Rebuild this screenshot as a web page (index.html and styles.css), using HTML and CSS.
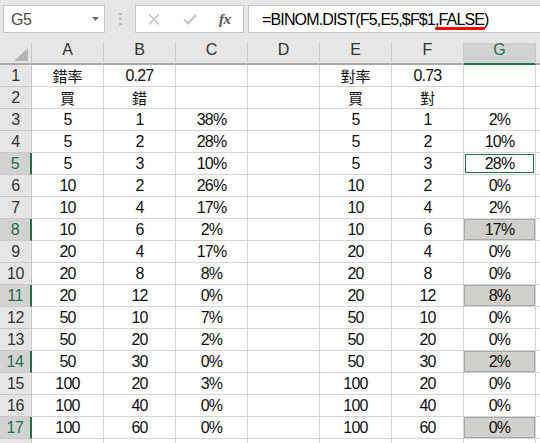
FILE: index.html
```html
<!DOCTYPE html>
<html lang="zh-Hant">
<head>
<meta charset="utf-8">
<title>BINOM.DIST</title>
<link rel="stylesheet" href="styles.css">
</head>
<body>
<div class="app">
  <div class="formula-bar">
    <div class="name-box">
      <span class="cell-ref">G5</span>
      <svg class="caret" width="7" height="4" viewBox="0 0 7 4"><path d="M0 0h7L3.5 4z" fill="#707070"/></svg>
    </div>
    <div class="grip">
      <svg width="3" height="12" viewBox="0 0 3 12"><rect x="0" y="0" width="3" height="2" fill="#b9b9b9"/><rect x="0" y="5" width="3" height="2" fill="#b9b9b9"/><rect x="0" y="10" width="3" height="2" fill="#b9b9b9"/></svg>
    </div>
    <div class="fx-buttons">
      <svg class="btn-cancel" width="12" height="11" viewBox="0 0 12 11"><path d="M1 0.5L11 10.5M11 0.5L1 10.5" stroke="#c3c3c3" stroke-width="1.5" fill="none"/></svg>
      <svg class="btn-enter" width="14" height="11" viewBox="0 0 14 11"><path d="M1 5.5L5 9.5L13 1" stroke="#c3c3c3" stroke-width="2" fill="none"/></svg>
      <span class="btn-fx">fx</span>
    </div>
    <div class="formula-input">=BINOM.DIST(F5,E5,$F$1<span class="mark">,FALSE</span>)</div>
  </div>

  <div class="sheet">
    <div class="corner"><span class="corner-tri"></span></div>
    <div class="ch">A</div><div class="ch">B</div><div class="ch">C</div><div class="ch">D</div><div class="ch">E</div><div class="ch">F</div><div class="ch cur">G</div><div class="ch"></div>

    <div class="rh">1</div><div class="c cjk">錯率</div><div class="c">0.27</div><div class="c"></div><div class="c"></div><div class="c cjk">對率</div><div class="c">0.73</div><div class="c"></div><div class="c"></div>
    <div class="rh">2</div><div class="c cjk">買</div><div class="c cjk">錯</div><div class="c"></div><div class="c"></div><div class="c cjk">買</div><div class="c cjk">對</div><div class="c"></div><div class="c"></div>
    <div class="rh">3</div><div class="c">5</div><div class="c">1</div><div class="c">38%</div><div class="c"></div><div class="c">5</div><div class="c">1</div><div class="c">2%</div><div class="c"></div>
    <div class="rh">4</div><div class="c">5</div><div class="c">2</div><div class="c">28%</div><div class="c"></div><div class="c">5</div><div class="c">2</div><div class="c">10%</div><div class="c"></div>
    <div class="rh sel">5</div><div class="c">5</div><div class="c">3</div><div class="c">10%</div><div class="c"></div><div class="c">5</div><div class="c">3</div><div class="c active">28%</div><div class="c"></div>
    <div class="rh">6</div><div class="c">10</div><div class="c">2</div><div class="c">26%</div><div class="c"></div><div class="c">10</div><div class="c">2</div><div class="c">0%</div><div class="c"></div>
    <div class="rh">7</div><div class="c">10</div><div class="c">4</div><div class="c">17%</div><div class="c"></div><div class="c">10</div><div class="c">4</div><div class="c">2%</div><div class="c"></div>
    <div class="rh sel">8</div><div class="c">10</div><div class="c">6</div><div class="c">2%</div><div class="c"></div><div class="c">10</div><div class="c">6</div><div class="c picked">17%</div><div class="c"></div>
    <div class="rh">9</div><div class="c">20</div><div class="c">4</div><div class="c">17%</div><div class="c"></div><div class="c">20</div><div class="c">4</div><div class="c">0%</div><div class="c"></div>
    <div class="rh">10</div><div class="c">20</div><div class="c">8</div><div class="c">8%</div><div class="c"></div><div class="c">20</div><div class="c">8</div><div class="c">0%</div><div class="c"></div>
    <div class="rh sel">11</div><div class="c">20</div><div class="c">12</div><div class="c">0%</div><div class="c"></div><div class="c">20</div><div class="c">12</div><div class="c picked">8%</div><div class="c"></div>
    <div class="rh">12</div><div class="c">50</div><div class="c">10</div><div class="c">7%</div><div class="c"></div><div class="c">50</div><div class="c">10</div><div class="c">0%</div><div class="c"></div>
    <div class="rh">13</div><div class="c">50</div><div class="c">20</div><div class="c">2%</div><div class="c"></div><div class="c">50</div><div class="c">20</div><div class="c">0%</div><div class="c"></div>
    <div class="rh sel">14</div><div class="c">50</div><div class="c">30</div><div class="c">0%</div><div class="c"></div><div class="c">50</div><div class="c">30</div><div class="c picked">2%</div><div class="c"></div>
    <div class="rh">15</div><div class="c">100</div><div class="c">20</div><div class="c">3%</div><div class="c"></div><div class="c">100</div><div class="c">20</div><div class="c">0%</div><div class="c"></div>
    <div class="rh">16</div><div class="c">100</div><div class="c">40</div><div class="c">0%</div><div class="c"></div><div class="c">100</div><div class="c">40</div><div class="c">0%</div><div class="c"></div>
    <div class="rh sel">17</div><div class="c">100</div><div class="c">60</div><div class="c">0%</div><div class="c"></div><div class="c">100</div><div class="c">60</div><div class="c picked">0%</div><div class="c"></div>
    <div class="rh"></div><div class="c"></div><div class="c"></div><div class="c"></div><div class="c"></div><div class="c"></div><div class="c"></div><div class="c"></div><div class="c"></div>
  </div>
</div>
</body>
</html>
```

FILE: styles.css
```css
html, body {
  margin: 0;
  padding: 0;
}

body {
  width: 540px;
  height: 443px;
  overflow: hidden;
  background: #e6e6e6;
  font-family: "Liberation Sans", "Noto Sans CJK TC", sans-serif;
  color: #000;
}

.app {
  width: 540px;
  height: 443px;
  overflow: hidden;
}

/* ---------- formula bar ---------- */
.formula-bar {
  display: flex;
  align-items: flex-start;
  height: 43px;
  padding-top: 5px;
  box-sizing: border-box;
}

.name-box {
  margin-left: 3px;
  width: 102px;
  height: 28px;
  box-sizing: border-box;
  background: #fff;
  border: 1px solid #c6c6c6;
  display: flex;
  align-items: center;
  justify-content: space-between;
  padding: 1px 5px 0 7px;
  font-size: 16px;
  letter-spacing: -0.4px;
  color: #4a4a4a;
}

.caret {
  display: block;
  margin-top: -2px;
}

.grip {
  width: 30px;
  height: 28px;
  display: flex;
  align-items: center;
  justify-content: center;
}

.grip svg {
  display: block;
}

.fx-buttons {
  width: 109px;
  height: 28px;
  box-sizing: border-box;
  background: #fff;
  border: 1px solid #c6c6c6;
  display: flex;
  align-items: center;
}

.btn-cancel {
  display: block;
  margin-left: 12px;
}

.btn-enter {
  display: block;
  margin-left: 23px;
}

.btn-fx {
  margin-left: 22px;
  font-family: "Liberation Serif", serif;
  font-style: italic;
  font-weight: bold;
  font-size: 15px;
  color: #555;
  letter-spacing: -0.5px;
}

.formula-input {
  flex: 1;
  margin-left: 4px;
  height: 28px;
  box-sizing: border-box;
  background: #fff;
  border: 1px solid #c6c6c6;
  border-right: none;
  padding: 2px 0 0 13px;
  display: flex;
  align-items: center;
  font-size: 16px;
  letter-spacing: -0.85px;
  white-space: nowrap;
  color: #000;
}

.mark {
  position: relative;
}

.mark::after {
  content: "";
  position: absolute;
  left: 0;
  right: -1px;
  bottom: -1px;
  height: 3px;
  border-radius: 2px;
  background: #ff0000;
}

/* ---------- grid ---------- */
.sheet {
  display: grid;
  grid-template-columns: 32px repeat(8, 72px);
  grid-template-rows: 22px;
  grid-auto-rows: 22px;
  background: #fff;
}

.corner,
.ch,
.rh,
.c {
  box-sizing: border-box;
  display: flex;
  align-items: center;
  justify-content: center;
}

.corner {
  background: #e6e6e6;
  border-right: 1px solid #c6c6c6;
  border-bottom: 2px solid #a8a8a8;
  position: relative;
}

.corner-tri {
  position: absolute;
  right: 3px;
  bottom: 2px;
  width: 0;
  height: 0;
  border-left: 14px solid transparent;
  border-bottom: 13px solid #b4b4b4;
}

.ch {
  background: #e6e6e6;
  border-right: 1px solid #c8c8c8;
  border-bottom: 2px solid #a8a8a8;
  font-size: 16px;
  color: #333;
  padding-bottom: 6px;
}

.ch.cur {
  background: #d2d2d2;
  color: #217346;
  border-bottom: 2px solid #217346;
}

.rh {
  background: #e6e6e6;
  border-right: 1px solid #c8c8c8;
  border-bottom: 1px solid #c8c8c8;
  font-size: 16px;
  letter-spacing: -0.5px;
  color: #333;
}

.rh.sel {
  background: #d2d2d2;
  color: #217346;
  border-right: 2px solid #217346;
}

.c {
  border-right: 1px solid #d4d4d4;
  border-bottom: 1px solid #d4d4d4;
  font-size: 16px;
  letter-spacing: -0.8px;
  white-space: nowrap;
  color: #111;
}

.c.cjk {
  font-family: "Noto Sans CJK TC", sans-serif;
  font-size: 15px;
  letter-spacing: 0;
}

.c.picked {
  background: #d2d0cc;
  box-shadow: inset 0 0 0 1px #a9a9a9;
}

.c.active {
  box-shadow: inset 0 0 0 1px #fff, inset 0 0 0 2px #217346;
}
```
